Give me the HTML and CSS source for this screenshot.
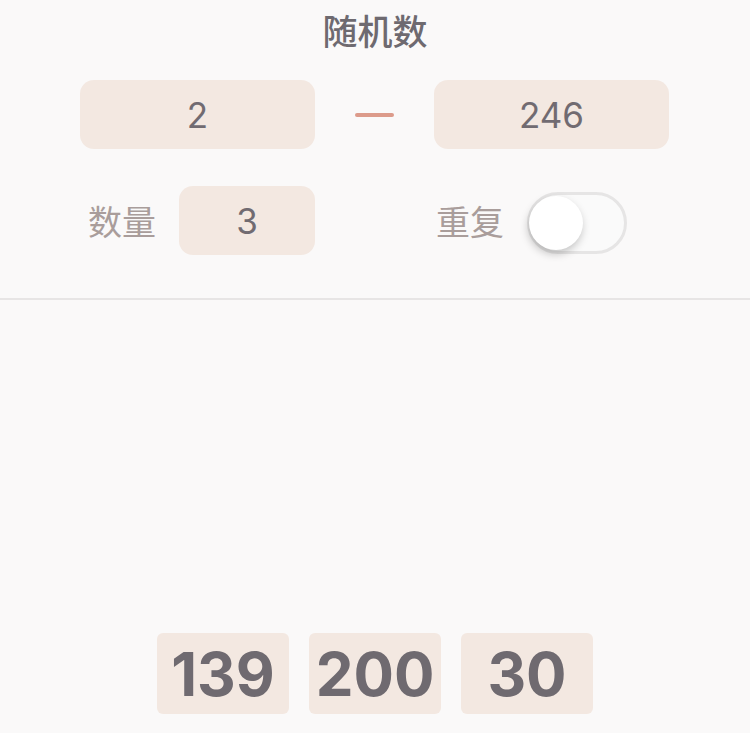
FILE: index.html
```html
<!DOCTYPE html>
<html lang="zh-CN">
<head>
<meta charset="utf-8">
<title>随机数</title>
<link rel="stylesheet" href="styles.css">
</head>
<body>
<div class="page">
  <header class="header">随机数</header>
  <div class="range">
    <div class="field field-wide">2</div>
    <div class="dash"></div>
    <div class="field field-wide">246</div>
  </div>
  <div class="options">
    <div class="group group-count">
      <span class="label">数量</span>
      <div class="field field-small">3</div>
    </div>
    <div class="group">
      <span class="label">重复</span>
      <div class="switch"><div class="knob"></div></div>
    </div>
  </div>
  <div class="divider"></div>
  <div class="results">
    <div class="result">139</div>
    <div class="result">200</div>
    <div class="result">30</div>
  </div>
</div>
</body>
</html>
```

FILE: styles.css
```css
html, body {
  margin: 0;
  padding: 0;
  background: #faf9f9;
}
body {
  width: 750px;
  height: 733px;
  overflow: hidden;
  font-family: Inter, "Noto Sans CJK SC", sans-serif;
}
.page {
  display: flex;
  flex-direction: column;
}
.header {
  height: 60px;
  line-height: 60px;
  text-align: center;
  font-family: "Noto Sans CJK SC", sans-serif;
  font-size: 35px;
  font-weight: 500;
  color: #6e6a70;
}
.range {
  margin-top: 20px;
  display: flex;
  align-items: center;
  padding-left: 80px;
  gap: 40px;
}
.field {
  background: #f3e8e1;
  border-radius: 14px;
  height: 69px;
  display: flex;
  align-items: center;
  justify-content: center;
  font-family: Inter, sans-serif;
  font-size: 35px;
  font-weight: 400;
  color: #716b71;
}
.field-wide { width: 235px; }
.field-small { width: 136px; }
.dash {
  width: 39px;
  height: 4px;
  border-radius: 2px;
  background: #dc9b8b;
}
.options {
  margin-top: 37px;
  display: flex;
  align-items: center;
  padding-left: 88px;
  gap: 121px;
}
.group {
  display: flex;
  align-items: center;
  gap: 23px;
}
.label {
  font-family: "Noto Sans CJK SC", sans-serif;
  font-size: 34px;
  color: #a99d9b;
  line-height: 1;
}
.switch {
  position: relative;
  box-sizing: border-box;
  width: 100px;
  height: 62px;
  border: 3px solid #e6e5e5;
  border-radius: 31px;
  background: #fafafa;
  margin-top: 4px;
}
.knob {
  position: absolute;
  left: -1px;
  top: 1px;
  width: 54px;
  height: 54px;
  border-radius: 50%;
  background: #ffffff;
  box-shadow: -1px 4px 8px rgba(0, 0, 0, 0.22);
}
.divider {
  margin-top: 43px;
  height: 2px;
  background: #e7e5e5;
}
.results {
  margin-top: 333px;
  display: flex;
  justify-content: center;
  gap: 20px;
}
.result {
  width: 132px;
  height: 81px;
  border-radius: 6px;
  background: #f3e8e1;
  display: flex;
  align-items: center;
  justify-content: center;
  font-family: Inter, sans-serif;
  font-size: 60px;
  font-weight: 700;
  color: #6f6a70;
}
```
